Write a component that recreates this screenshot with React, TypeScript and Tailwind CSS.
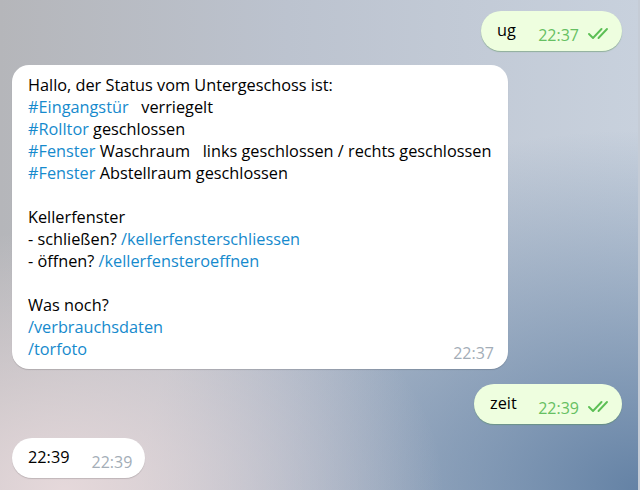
import React from 'react';

function Checks() {
  return (
    <svg width="24" height="13" viewBox="0 0 24 13" fill="none" className="text-[#5cbf55]">
      <path d="M1 7 L5 11 L13.5 2" stroke="currentColor" strokeWidth="1.9" strokeLinecap="round" strokeLinejoin="round" />
      <path d="M10.5 11 L19 2" stroke="currentColor" strokeWidth="1.9" strokeLinecap="round" strokeLinejoin="round" />
    </svg>
  );
}

function Out({ text, time, width }: { text: string; time: string; width: string }) {
  return (
    <div className={`self-end mr-[18px] h-10 ${width} rounded-[20px] bg-[#eefedf] shadow-[0_1px_1px_rgba(80,140,80,0.45)] flex items-center pl-4 pr-[10px]`}>
      <span className="text-[16.3px] text-black -mt-[3px]">{text}</span>
      <span className="ml-auto text-[16px] text-[#66c062] mt-[8px]">{time}</span>
      <span className="ml-[9px] mt-[5px]"><Checks /></span>
    </div>
  );
}

const tag = 'text-[#168acd]';

export default function App() {
  return (
    <div
      className="relative w-[640px] h-[490px] overflow-hidden flex flex-col font-['Open_Sans',sans-serif] leading-[22px] text-[16.3px]"
      style={{
        background:
          'radial-gradient(ellipse 380px 260px at 10% 100%, rgba(232,218,220,0.95), rgba(232,218,220,0) 100%), radial-gradient(ellipse 500px 360px at 100% 100%, rgba(100,130,165,1), rgba(100,130,165,0) 100%), linear-gradient(90deg, #b5b6ba 0%, #bcc3cf 45%, #c8d1dd 100%)',
      }}
    >
      <div className="h-[11px]" />
      <Out text="ug" time="22:37" width="w-[141px]" />

      <div className="ml-3 mt-[14px] w-[496px] rounded-[17px] bg-white shadow-[0_1px_1px_rgba(0,0,0,0.15)] pl-4 pr-[14px] pt-[9px] pb-[9px] text-black">
        <div>Hallo, der Status vom Untergeschoss ist:</div>
        <div><span className={tag}>#Eingangstür</span>&nbsp;&nbsp; verriegelt</div>
        <div><span className={tag}>#Rolltor</span> geschlossen</div>
        <div><span className={tag}>#Fenster</span> Waschraum &nbsp; links geschlossen / rechts geschlossen</div>
        <div><span className={tag}>#Fenster</span> Abstellraum geschlossen</div>
        <div>&nbsp;</div>
        <div>Kellerfenster</div>
        <div>- schließen? <span className={tag}>/kellerfensterschliessen</span></div>
        <div>- öffnen? <span className={tag}>/kellerfensteroeffnen</span></div>
        <div>&nbsp;</div>
        <div>Was noch?</div>
        <div className={tag}>/verbrauchsdaten</div>
        <div className="flex items-end">
          <span className={tag}>/torfoto</span>
          <span className="ml-auto text-[16px] text-[#a3adb7] translate-y-[4px]">22:37</span>
        </div>
      </div>

      <div className="mt-[15px]" />
      <Out text="zeit" time="22:39" width="w-[148px]" />

      <div className="ml-3 mt-[14px] h-10 w-[133px] rounded-[20px] bg-white shadow-[0_1px_1px_rgba(0,0,0,0.15)] flex items-center pl-4">
        <span className="text-[16.3px] text-black -mt-[3px]">22:39</span>
        <span className="ml-[22px] text-[16px] text-[#a3adb7] mt-[8px]">22:39</span>
      </div>

      <div className="absolute right-0 top-0 h-full w-[2px] bg-[#c5ccd6]" />
    </div>
  );
}
